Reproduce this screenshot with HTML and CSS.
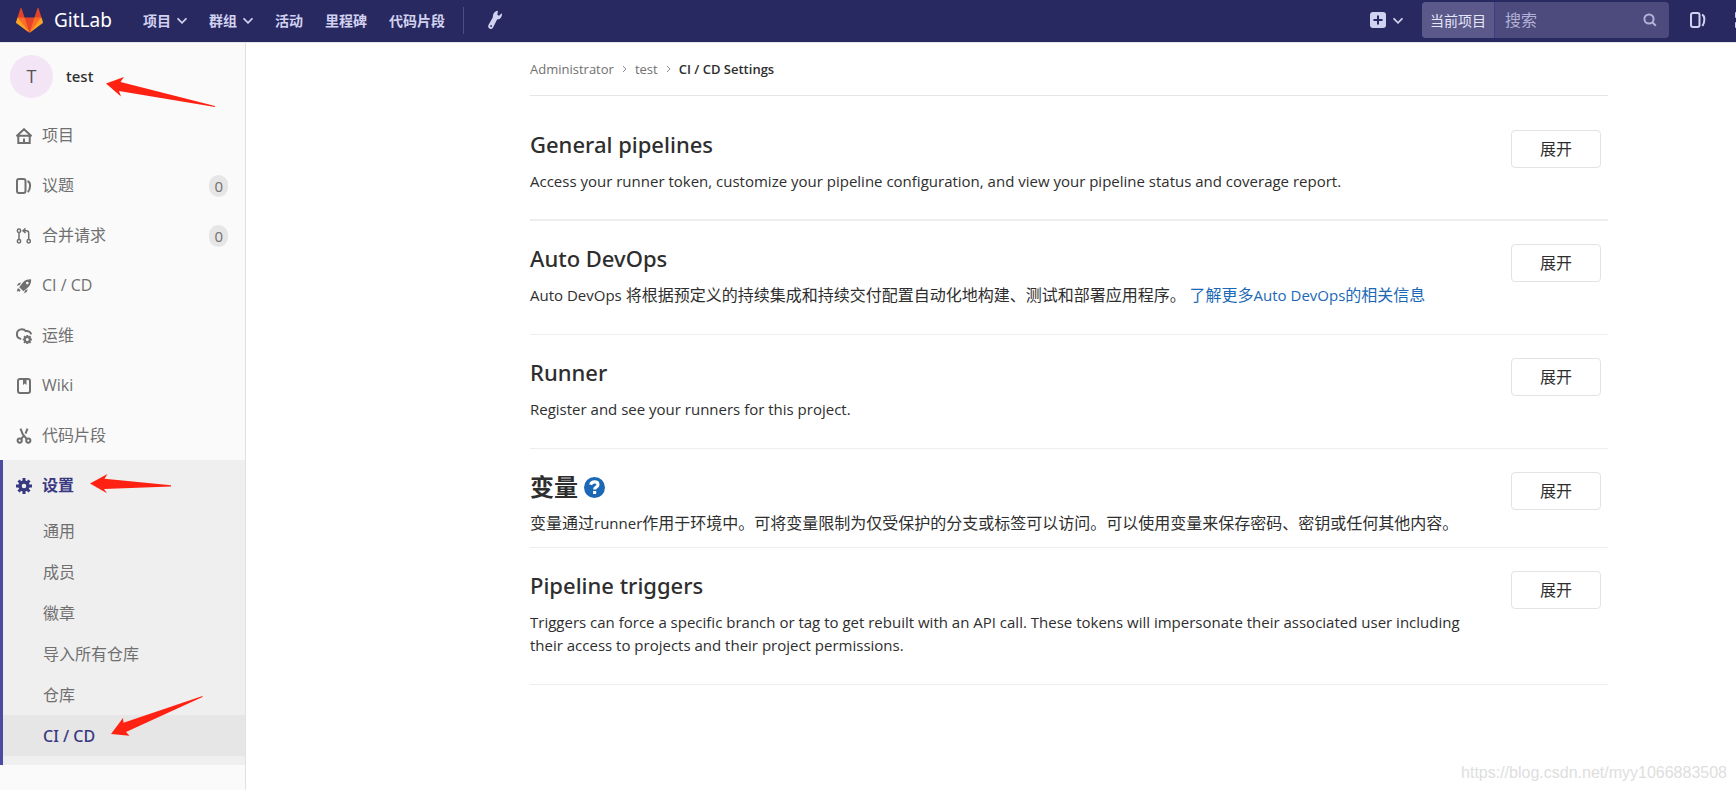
FILE: index.html
```html
<!DOCTYPE html>
<html lang="zh-CN">
<head>
<meta charset="utf-8">
<title>CI / CD Settings · test · GitLab</title>
<meta name="viewport" content="width=device-width, initial-scale=1">
<link rel="stylesheet" href="styles.css">
</head>
<body>
<header class="navbar">
  <a class="brand" href="#">
    <svg class="brand-logo" viewBox="0 0 36 36" aria-hidden="true">
      <path fill="#e24329" d="M2 14l9.38 9v-9l-4-12.28c-.205-.632-1.176-.632-1.38 0z"/>
      <path fill="#e24329" d="M34 14l-9.38 9v-9l4-12.28c.205-.632 1.176-.632 1.38 0z"/>
      <path fill="#e24329" d="M18 34.38L3 14h30z"/>
      <path fill="#fc6d26" d="M18 34.38L11.38 14H2l4 11z"/>
      <path fill="#fc6d26" d="M18 34.38L24.62 14H34l-4 11z"/>
      <path fill="#fca326" d="M2 14L.1 20.16c-.18.565 0 1.2.5 1.56l17.42 12.66z"/>
      <path fill="#fca326" d="M34 14l1.9 6.16c.18.565 0 1.2-.5 1.56L18 34.38z"/>
    </svg>
    <span class="brand-name">GitLab</span>
  </a>
  <nav class="nav-links" aria-label="主导航">
    <button class="nav-item" type="button">项目 <svg class="chevron" viewBox="0 0 9 6"><path d="M.5 1l4 4 4-4"/></svg></button>
    <button class="nav-item" type="button">群组 <svg class="chevron" viewBox="0 0 9 6"><path d="M.5 1l4 4 4-4"/></svg></button>
    <a class="nav-item" href="#">活动</a>
    <a class="nav-item" href="#">里程碑</a>
    <a class="nav-item" href="#">代码片段</a>
  </nav>
  <span class="nav-divider"></span>
  <a class="nav-icon" href="#" aria-label="管理区域">
    <svg class="wrench" viewBox="0 0 14 20"><path fill="currentColor" d="M8.600 1c.8-.5 1.500-.2 1.300.6L9.300 4.700l1.700 1 2.100-1.900c.6-.4 1-.1.900.6-.2 2.700-1.600 4.600-3.900 4.900-.7.100-1.100.4-1.400 1l-3.600 7.100c-.9 1.500-2.500 1.900-3.800 1.100C.1 17.700-.2 16.200.6 14.700l4-7c.3-.5.4-.9.300-1.500C5 3.800 6.400 1.900 8.600 1z"/><circle cx="3.100" cy="16" r=".9" fill="#292961"/></svg>
  </a>
  <div class="nav-right">
    <button class="new-menu" type="button" aria-label="新建">
      <svg class="icon" viewBox="0 0 16 16"><rect width="16" height="16" rx="3" fill="currentColor"/><path d="M8 3.500v9M3.500 8h9" stroke="#292961" stroke-width="2"/></svg>
      <svg class="chevron" viewBox="0 0 9 6"><path d="M.5 1l4 4 4-4"/></svg>
    </button>
    <form class="search">
      <label class="search-scope" for="search">当前项目</label>
      <input class="search-input" id="search" type="text" placeholder="搜索">
      <svg class="search-icon" viewBox="0 0 14 14"><circle cx="6" cy="6" r="4.600"/><path d="M9.500 9.500l3.300 3.300"/></svg>
    </form>
    <a class="nav-icon" href="#" aria-label="议题">
      <svg class="icon line" viewBox="0 0 16 16"><rect x="1" y="1" width="8.500" height="14" rx="2"/><path d="M12 2.800c3.200.8 3 7.400.4 11.200"/></svg>
    </a>
    <a class="nav-icon nav-clipped" href="#" aria-label="合并请求">
      <svg class="icon line" viewBox="0 0 16 16"><circle cx="2" cy="3" r="2"/><circle cx="2" cy="13" r="2"/></svg>
    </a>
  </div>
</header>

<div class="layout">
  <aside class="sidebar">
    <a class="context" href="#">
      <span class="avatar">T</span>
      <span class="context-name">test</span>
    </a>
    <ul class="side-list">
      <li><a class="side-item" href="#"><svg class="icon line" viewBox="0 0 16 16"><path d="M.4 8.200L8 1.200l7.600 7M.5 7.800h15M2.300 7.800V15h11.400V7.800M8 14.500v-4"/></svg>项目</a></li>
      <li><a class="side-item" href="#"><svg class="icon line" viewBox="0 0 16 16"><rect x="1" y="1" width="8.500" height="14" rx="2"/><path d="M11.500 3.200c3.600.8 3.200 7 .5 11"/></svg>议题<span class="count">0</span></a></li>
      <li><a class="side-item" href="#"><svg class="icon thin" viewBox="0 0 16 16"><circle cx="3" cy="2.700" r="1.700"/><circle cx="3" cy="13.300" r="1.700"/><circle cx="12.700" cy="13.300" r="1.700"/><path d="M3 4.500v7M12.700 11.500V5c0-1.600-.8-2.300-2.200-2.300H7.500M9.500.4L7 2.700 9.500 5"/></svg>合并请求<span class="count">0</span></a></li>
      <li><a class="side-item" href="#"><svg class="icon" viewBox="0 0 16 16"><path fill="currentColor" fill-rule="evenodd" d="M14.400 1.200c.6 0 .8.200.8.800-.1 3.300-1.200 5.700-3.300 7.600l-4.400 3.600-4.300-4L6.800 4.500C8.700 2.300 11.200 1.200 14.400 1.200zM11.300 3.800a1.300 1.300 0 100 2.600 1.300 1.300 0 000-2.600z"/><path fill="currentColor" d="M5.300 4.400L2.500 5.200.6 7.700l2.800-.5zM11.700 11l-.8 2.700-2.700 1.900.6-2.800zM2.600 10.200l-1.900 1 .8.300-.7 2.200 2.200-.6.200 1 1.500-1.900z"/></svg>CI / CD</a></li>
      <li><a class="side-item" href="#"><svg class="icon line" viewBox="0 0 16 16"><path d="M5.200 10.900C2.300 10.600.9 8.900.9 6.300.9 3 3.200 1.200 6 1.200c1.500 0 2.900.7 3.800 1.900 2.400-.5 4.800.6 5.300 3.200"/><circle cx="11.300" cy="11.600" r="2.500"/><path d="M11.300 7v2M11.300 14.300v2M6.800 11.600h2M13.900 11.600h2M8 8.300l1.500 1.500M13.100 13.400l1.500 1.500M14.600 8.300l-1.500 1.500M9.500 13.400L8 14.900"/></svg>运维</a></li>
      <li><a class="side-item" href="#"><svg class="icon line" viewBox="0 0 16 16"><rect x="2" y="1" width="12" height="14" rx="2"/><path fill="currentColor" stroke="none" d="M7 1h3.500v6L8.750 5.500 7 7z"/></svg>Wiki</a></li>
      <li><a class="side-item" href="#"><svg class="icon line" viewBox="0 0 16 16"><circle cx="3.700" cy="12.600" r="2.100"/><circle cx="12.300" cy="12.600" r="2.100"/><path d="M4.500.6l2.200 5.600 4.200 5M11.500.6L9.500 5.600M7.800 7.800l-2.600 3.100"/></svg>代码片段</a></li>
      <li class="side-group">
        <a class="side-item side-item-active" href="#"><svg class="icon" viewBox="0 0 16 16"><circle cx="8" cy="8" r="4" fill="none" stroke="currentColor" stroke-width="3.400"/><path stroke="currentColor" stroke-width="3" d="M8 0v3M8 13v3M0 8h3M13 8h3M2.500 2.500l2 2M11.500 11.500l2 2M13.500 2.500l-2 2M4.500 11.500l-2 2"/></svg>设置</a>
        <ul class="sub-list">
          <li><a class="sub-item" href="#">通用</a></li>
          <li><a class="sub-item" href="#">成员</a></li>
          <li><a class="sub-item" href="#">徽章</a></li>
          <li><a class="sub-item" href="#">导入所有仓库</a></li>
          <li><a class="sub-item" href="#">仓库</a></li>
          <li><a class="sub-item sub-item-active" href="#">CI / CD</a></li>
        </ul>
      </li>
    </ul>
  </aside>

  <main class="content">
    <nav class="breadcrumbs" aria-label="面包屑">
      <a class="crumb" href="#">Administrator</a>
      <svg class="crumb-sep" viewBox="0 0 5 8"><path d="M1 1l3 3-3 3"/></svg>
      <a class="crumb" href="#">test</a>
      <svg class="crumb-sep" viewBox="0 0 5 8"><path d="M1 1l3 3-3 3"/></svg>
      <a class="crumb crumb-current" href="#">CI / CD Settings</a>
    </nav>

    <section class="settings settings-first">
      <div class="settings-text">
        <h4 class="settings-title">General pipelines</h4>
        <p class="settings-desc">Access your runner token, customize your pipeline configuration, and view your pipeline status and coverage report.</p>
      </div>
      <button class="btn" type="button">展开</button>
    </section>
    <section class="settings">
      <div class="settings-text">
        <h4 class="settings-title">Auto DevOps</h4>
        <p class="settings-desc">Auto DevOps <span class="cjk">将根据预定义的持续集成和持续交付配置自动化地构建、测试和部署应用程序。</span> <a class="link" href="#"><span class="cjk">了解更多</span>Auto DevOps<span class="cjk">的相关信息</span></a></p>
      </div>
      <button class="btn" type="button">展开</button>
    </section>
    <section class="settings">
      <div class="settings-text">
        <h4 class="settings-title">Runner</h4>
        <p class="settings-desc">Register and see your runners for this project.</p>
      </div>
      <button class="btn" type="button">展开</button>
    </section>
    <section class="settings settings-compact">
      <div class="settings-text">
        <h4 class="settings-title settings-title-cjk">变量
          <a class="help" href="#" aria-label="帮助"><svg class="help-icon" viewBox="0 0 20 20"><circle cx="10" cy="10" r="10" fill="currentColor"/><path fill="none" stroke="#fff" stroke-width="3" d="M6.300 7.300C6.900 5.400 8.200 4.700 10 4.700c2 0 3.300 1.100 3.300 2.600 0 2.300-3.200 2.100-3.200 4.700"/><path fill="#fff" d="M8.600 13.300h3v2.900h-3z"/></svg></a>
        </h4>
        <p class="settings-desc"><span class="cjk">变量通过</span>runner<span class="cjk">作用于环境中。可将变量限制为仅受保护的分支或标签可以访问。可以使用变量来保存密码、密钥或任何其他内容。</span></p>
      </div>
      <button class="btn" type="button">展开</button>
    </section>
    <section class="settings">
      <div class="settings-text">
        <h4 class="settings-title">Pipeline triggers</h4>
        <p class="settings-desc">Triggers can force a specific branch or tag to get rebuilt with an API call. These tokens will impersonate their associated user including their access to projects and their project permissions.</p>
      </div>
      <button class="btn" type="button">展开</button>
    </section>
  </main>
</div>

<svg class="arrows" viewBox="0 0 260 790" aria-hidden="true">
  <path d="M106 83.500L124 77l-3.500 5L215 106v1L119 91l2 5.500z"/>
  <path d="M90 483.500l17.500-9.500-3 4.700L171 485.200v1.200L104 489l3 4.300z"/>
  <path d="M111 734l12-16 .5 4.700L202.500 696v1L126 732l3.500 3.700z"/>
</svg>
<span class="watermark">https://blog.csdn.net/myy1066883508</span>
</body>
</html>
```

FILE: styles.css
```css
* {
  box-sizing: border-box;
}

body {
  margin: 0;
  min-height: 100vh;
  position: relative;
  display: flex;
  flex-direction: column;
  background: #fff;
  color: #2e2e2e;
  font-family: "Open Sans", "Noto Sans CJK SC", sans-serif;
  font-size: 15px;
  line-height: 23px;
}

a {
  color: inherit;
  text-decoration: none;
}

button {
  font: inherit;
  color: inherit;
  background: none;
  border: 0;
  padding: 0;
  cursor: pointer;
}

ul {
  list-style: none;
  margin: 0;
  padding: 0;
}

.icon {
  width: 16px;
  height: 16px;
  flex: none;
}

.line,
.thin {
  fill: none;
  stroke: currentColor;
  stroke-width: 2;
}

.thin {
  stroke-width: 1.5;
}

/* Top bar */
.navbar {
  display: flex;
  align-items: center;
  height: 43px;
  padding-bottom: 2px;
  padding-left: 16px;
  overflow: hidden;
  background: #292961;
  border-bottom: 1px solid #e5e5e5;
  color: #d1d1f0;
}

.brand {
  display: flex;
  align-items: center;
  gap: 11px;
  min-width: 127px;
  color: #fff;
}

.brand-logo {
  width: 27px;
  height: 27px;
}

.brand-name {
  font-family: "Noto Sans", sans-serif;
  font-size: 19px;
}

.nav-links {
  display: flex;
  gap: 22px;
}

.nav-item {
  display: flex;
  align-items: center;
  gap: 6px;
  font-size: 14px;
  font-weight: 700;
  white-space: nowrap;
}

.chevron {
  width: 10px;
  height: 7px;
  fill: none;
  stroke: currentColor;
  stroke-width: 1.5;
}

.nav-divider {
  width: 1px;
  height: 27px;
  margin: 0 24px 0 18px;
  background: #4f4f86;
}

.nav-icon {
  display: flex;
}

.wrench {
  width: 14px;
  height: 20px;
}

.nav-right {
  display: flex;
  align-items: center;
  margin-left: auto;
}

.new-menu {
  display: flex;
  align-items: center;
  gap: 7px;
  margin-right: 19px;
}

.search {
  display: flex;
  align-items: center;
  width: 247px;
  height: 36px;
  margin-right: 21px;
  padding-right: 12px;
  border-radius: 4px;
  overflow: hidden;
  background: #4d4b7d;
}

.search-scope {
  display: flex;
  align-items: center;
  height: 36px;
  padding: 0 8px;
  background: #5a5989;
  border-right: 1px solid #3f3c84;
  color: #e6e6fa;
  font-size: 14px;
  white-space: nowrap;
}

.search-input {
  flex: 1;
  min-width: 0;
  padding: 0 0 0 10px;
  border: 0;
  background: none;
  color: #fff;
  font: inherit;
  font-size: 16px;
}

.search-input::placeholder {
  color: #b2b1d6;
  opacity: 1;
}

.search-icon {
  width: 14px;
  height: 14px;
  fill: none;
  stroke: #b2b1d6;
  stroke-width: 2;
}

.nav-clipped {
  width: 1px;
  margin-left: 29px;
  overflow: hidden;
}

/* Page frame */
.layout {
  display: flex;
  flex: 1;
}

.sidebar {
  flex: none;
  width: 246px;
  background: #fafafa;
  border-right: 1px solid #e1e1e1;
  color: #707070;
}

.context {
  display: flex;
  align-items: center;
  gap: 13px;
  height: 67px;
  padding-left: 10px;
  color: #2e2e2e;
}

.avatar {
  display: flex;
  align-items: center;
  justify-content: center;
  width: 43px;
  height: 43px;
  border-radius: 50%;
  background: #f3e5f5;
  color: #555;
  font-size: 18px;
}

.context-name {
  font-family: "Noto Sans", sans-serif;
  font-weight: 500;
}

.side-item {
  display: flex;
  align-items: center;
  gap: 10px;
  height: 50px;
  padding: 1px 17px 0 16px;
  font-size: 16px;
}

.count {
  margin-left: auto;
  padding: 0 5px;
  border-radius: 11px;
  background: #e6e6e6;
  font-size: 15px;
  line-height: 22px;
}

.side-group {
  padding-bottom: 9px;
  background: #efefef;
  box-shadow: inset 3px 0 0 #4b4ba3;
}

.side-item-active,
.sub-item-active {
  color: #393982;
  font-weight: 600;
}

.sub-item {
  display: flex;
  align-items: center;
  height: 41px;
  margin-left: 3px;
  padding-top: 2px;
  padding-left: 40px;
  font-size: 16px;
}

.sub-item-active {
  background: #e6e6e6;
  font-family: "Noto Sans", sans-serif;
  font-weight: 500;
}

/* Settings page */
.content {
  flex: 1;
  min-width: 0;
  padding: 0 128px 0 284px;
}

.breadcrumbs {
  display: flex;
  align-items: center;
  gap: 8px;
  height: 53px;
  border-bottom: 1px solid #e5e5e5;
  color: #707070;
  font-size: 13px;
}

.crumb-current {
  color: #2e2e2e;
  font-weight: 600;
}

.crumb-sep {
  width: 5px;
  height: 8px;
  fill: none;
  stroke: #8f8f8f;
}

.settings {
  display: flex;
  align-items: flex-start;
  justify-content: space-between;
  padding: 23px 7px 27px 0;
  border-bottom: 1px solid #eee;
}

.settings-first {
  padding-top: 34px;
  padding-bottom: 26px;
  border-bottom-width: 2px;
}

.settings-compact {
  padding-bottom: 12px;
}

.settings-text {
  max-width: 940px;
}

.settings-title {
  display: flex;
  align-items: center;
  gap: 6px;
  margin: 0 0 12px;
  font-family: "Noto Sans", "Noto Sans CJK SC", sans-serif;
  font-size: 22px;
  font-weight: 500;
  line-height: 28px;
}

.settings-title-cjk {
  margin-bottom: 10px;
  font-size: 24px;
  font-weight: 700;
  line-height: 30px;
}

.settings-desc {
  margin: 0;
}

.cjk {
  font-size: 16px;
}

.link {
  color: #1b69b6;
}

.help {
  display: flex;
  color: #1b69b6;
}

.help-icon {
  width: 21px;
  height: 21px;
}

.btn {
  flex: none;
  width: 90px;
  height: 38px;
  border: 1px solid #e3e3e3;
  border-radius: 4px;
  background: #fff;
  font-size: 16px;
}

/* Annotations laid over the page */
.arrows {
  position: absolute;
  top: 0;
  left: 0;
  width: 260px;
  height: 790px;
  fill: #ff2112;
  pointer-events: none;
}

.watermark {
  position: absolute;
  right: 9px;
  bottom: 6px;
  color: #dedede;
  font-family: "Liberation Sans", sans-serif;
  font-size: 16px;
}
```
